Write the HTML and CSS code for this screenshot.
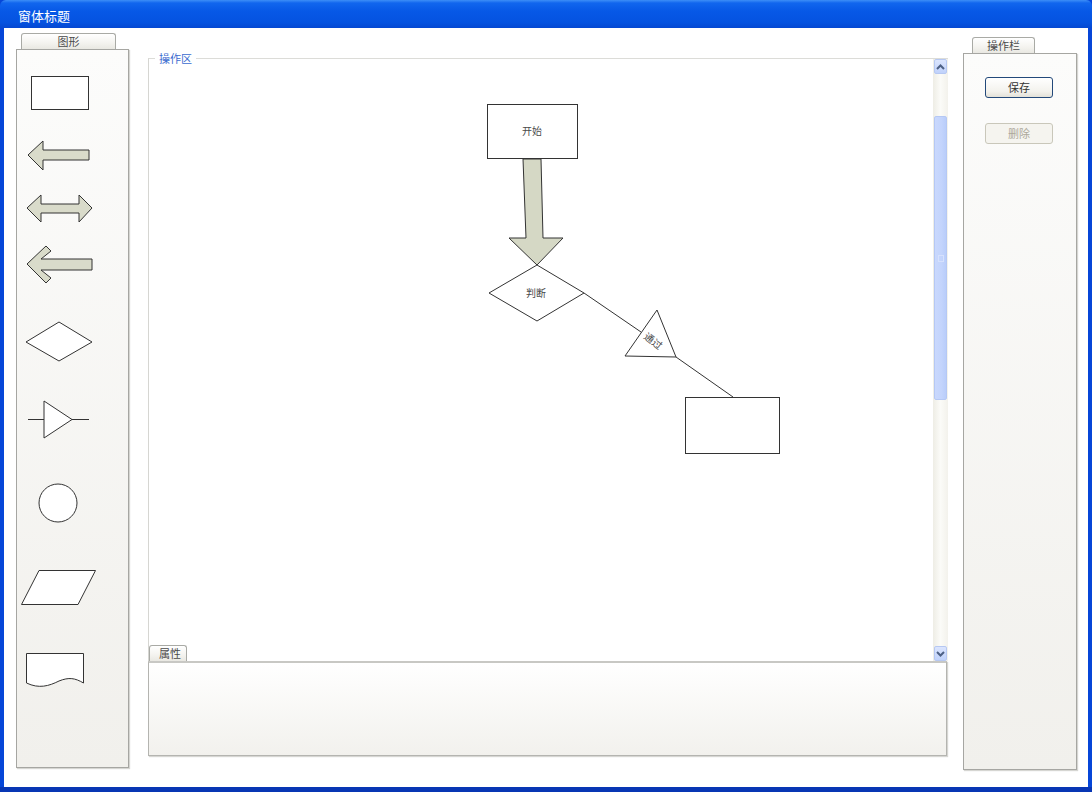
FILE: index.html
```html
<!DOCTYPE html>
<html lang="zh">
<head>
<meta charset="utf-8">
<title>窗体标题</title>
<link rel="stylesheet" href="styles.css">
</head>
<body>
<div class="window">
  <div class="titlebar">窗体标题</div>
  <div class="client">
    <div class="col-left">
      <div class="tab tab-left">图形</div>
      <div class="panel panel-left">
        <svg class="tool" width="113" height="75" viewBox="16 50 113 75"><rect x="30.5" y="76.5" width="57" height="33" fill="#fff" stroke="#333"/></svg>
        <svg class="tool" width="113" height="55" viewBox="16 125 113 55"><polygon points="27,155 42,141 42,150 88,150 88,160 42,160 42,170" fill="#d9dbca" stroke="#333"/></svg>
        <svg class="tool" width="113" height="52" viewBox="16 180 113 52"><polygon points="26,208 40,195 40,204 78,204 78,195 91,208 78,222 78,213 40,213 40,222" fill="#d9dbca" stroke="#333"/></svg>
        <svg class="tool" width="113" height="68" viewBox="16 232 113 68"><polygon points="26,264 45,246 50,251 40,259 91,259 91,270 40,270 50,278 45,283" fill="#d9dbca" stroke="#333"/></svg>
        <svg class="tool" width="113" height="80" viewBox="16 300 113 80"><polygon points="25,342 58,322 91,342 58,361" fill="#fff" stroke="#333"/></svg>
        <svg class="tool" width="113" height="80" viewBox="16 380 113 80"><line x1="27" y1="419.5" x2="43" y2="419.5" stroke="#333"/><polygon points="43,401 71,419.5 43,438" fill="#fff" stroke="#333"/><line x1="71" y1="419.5" x2="88" y2="419.5" stroke="#333"/></svg>
        <svg class="tool" width="113" height="80" viewBox="16 460 113 80"><circle cx="57" cy="503" r="19" fill="#fff" stroke="#333"/></svg>
        <svg class="tool" width="113" height="85" viewBox="16 540 113 85"><polygon points="20.5,604.5 38,570.5 94.5,570.5 77,604.5" fill="#fff" stroke="#333"/></svg>
        <svg class="tool" width="113" height="85" viewBox="16 625 113 85"><path d="M25.5,683 L25.5,653.5 L82.5,653.5 L82.5,683 C74,678 68,677 58,681 C48,686 38,689 25.5,683 Z" fill="#fff" stroke="#333"/></svg>
      </div>
    </div>

    <div class="col-center">
      <div class="workarea">
        <span class="legend">操作区</span>
        <div class="drawing">
          <svg class="diagram" width="784" height="602" viewBox="149 59 784 602">
            <rect x="487.5" y="104.5" width="90" height="54" fill="#fff" stroke="#333"/>
            <text x="532" y="135" class="node-text" text-anchor="middle">开始</text>
            <polygon points="523,159 541,159 543,238 563,238 537,265 509,238 526,238" fill="#d5d8c5" stroke="#333"/>
            <polygon points="489,293 537,265 584,293 537,321" fill="#fff" stroke="#333"/>
            <text x="536" y="297" class="node-text" text-anchor="middle">判断</text>
            <line x1="584" y1="293" x2="641" y2="332" stroke="#333"/>
            <polygon points="657,310 625,356 676,357" fill="#fff" stroke="#333"/>
            <text x="0" y="0" class="node-text" text-anchor="middle" transform="translate(651,344) rotate(38)">通过</text>
            <line x1="676" y1="357" x2="733" y2="397" stroke="#333"/>
            <rect x="685.5" y="397.5" width="94" height="56" fill="#fff" stroke="#333"/>
          </svg>
        </div>
        <div class="vscroll">
          <div class="sbtn"><svg width="9" height="6" viewBox="0 0 9 6"><path d="M1,5 L4.5,1.5 L8,5" fill="none" stroke="#4d6185" stroke-width="2"/></svg></div>
          <div class="strack">
            <div class="sthumb"><span class="grip"></span></div>
          </div>
          <div class="sbtn"><svg width="9" height="6" viewBox="0 0 9 6"><path d="M1,1 L4.5,4.5 L8,1" fill="none" stroke="#4d6185" stroke-width="2"/></svg></div>
        </div>
      </div>
      <div class="props">
        <div class="tab tab-props">属性</div>
        <div class="props-panel"></div>
      </div>
    </div>

    <div class="col-right">
      <div class="tab tab-right">操作栏</div>
      <div class="panel panel-right">
        <button class="btn">保存</button>
        <button class="btn btn-disabled" disabled>删除</button>
      </div>
    </div>
  </div>
</div>
</body>
</html>
```

FILE: styles.css
```css
html, body {
  margin: 0;
  padding: 0;
}
body {
  font-family: "Noto Sans CJK SC", "Noto Sans", sans-serif;
  width: 1092px;
  height: 792px;
  overflow: hidden;
}
.window {
  width: 1092px;
  height: 792px;
  box-sizing: border-box;
  display: flex;
  flex-direction: column;
  background: #0646d8;
  padding: 0 4px 5px 4px;
  box-shadow: inset 0 -5px 0 #0836b4;
}
.titlebar {
  height: 28px;
  margin: 0 -4px;
  padding-left: 18px;
  box-sizing: border-box;
  background: linear-gradient(#3d8ef7 0, #1166ee 3px, #0758e6 40%, #0553e0 80%, #0548d2 100%);
  color: #fff;
  font-size: 13px;
  line-height: 31px;
  border-radius: 6px 6px 0 0;
}
.client {
  flex: 1;
  background: #fff;
  display: flex;
}
.col-left {
  margin-left: 12px;
  width: 113px;
  padding-top: 5px;
}
.tab {
  box-sizing: border-box;
  height: 16px;
  border: 1px solid #a9aaa5;
  border-bottom: 0;
  border-radius: 3px 3px 0 0;
  background: linear-gradient(#ffffff, #f4f3ef 60%, #e9e8e2);
  font-size: 11px;
  line-height: 15px;
  color: #4a4a4a;
  text-align: center;
}
.tab-left {
  width: 95px;
  margin-left: 5px;
}
.panel {
  box-sizing: border-box;
  border: 1px solid #a6a6a2;
  box-shadow: 1px 1px 1px #d6d6d2;
  background: linear-gradient(#fcfcfb, #f1f0ec);
}
.panel-left {
  height: 719px;
  display: flex;
  flex-direction: column;
}
.tool {
  display: block;
  flex: none;
}
.col-center {
  margin-left: 19px;
  width: 800px;
  padding-top: 30px;
  display: flex;
  flex-direction: column;
}
.workarea {
  position: relative;
  height: 603px;
  box-sizing: border-box;
  border-top: 1px solid #dcdcd8;
  border-left: 1px solid #d6d6d2;
  display: flex;
}
.legend {
  position: absolute;
  left: 6px;
  top: -8px;
  background: #fff;
  padding: 0 4px;
  font-size: 11px;
  line-height: 14px;
  color: #3a6bd0;
}
.drawing {
  flex: 1;
  background: #fff;
}
.diagram {
  display: block;
}
.node-text {
  font-family: "Noto Sans CJK SC", sans-serif;
  font-size: 10px;
  fill: #4a4a4a;
}
.vscroll {
  width: 16px;
  display: flex;
  flex-direction: column;
  background: linear-gradient(90deg, #eeede5, #fbfbf8 50%, #f3f2ec);
}
.sbtn {
  height: 15px;
  box-sizing: border-box;
  margin: 0 1px;
  border: 1px solid #b6c8f2;
  border-radius: 2px;
  background: linear-gradient(#dbe5fe, #c0d2fb);
  display: flex;
  align-items: center;
  justify-content: center;
}
.strack {
  flex: 1;
  padding-top: 42px;
}
.sthumb {
  height: 284px;
  margin: 0 1px;
  box-sizing: border-box;
  border: 1px solid #b5c8f4;
  border-radius: 2px;
  background: linear-gradient(90deg, #c9d8fd, #c3d4fc 60%, #b9cdfa);
  display: flex;
  align-items: center;
  justify-content: center;
}
.grip {
  width: 6px;
  height: 7px;
  border: 1px solid #d6e1fd;
  box-sizing: border-box;
}
.props {
  margin-top: -16px;
  position: relative;
}
.tab-props {
  width: 38px;
  margin-left: 1px;
  text-align: left;
  padding-left: 9px;
}
.props-panel {
  height: 95px;
  width: 799px;
  box-sizing: border-box;
  border: 1px solid #b4b4b0;
  border-top: 2px solid #c8c8c4;
  box-shadow: 1px 1px 1px #d6d6d2;
  background: linear-gradient(#ffffff, #f2f1ed);
}
.col-right {
  margin-left: 15px;
  width: 114px;
  padding-top: 9px;
}
.tab-right {
  width: 63px;
  margin-left: 9px;
}
.panel-right {
  height: 717px;
  display: flex;
  flex-direction: column;
  align-items: center;
  padding-top: 23px;
  gap: 25px;
}
.btn {
  width: 68px;
  height: 21px;
  box-sizing: border-box;
  border: 1px solid #23497a;
  border-radius: 3px;
  background: linear-gradient(#ffffff, #f3f2ed 70%, #e3e1d8);
  font-family: "Noto Sans CJK SC", sans-serif;
  font-size: 11px;
  color: #333;
  padding: 0;
  line-height: 19px;
  margin-left: -2px;
}
.btn-disabled {
  border-color: #c9c7ba;
  color: #aca899;
  background: #f5f4ef;
}
```
